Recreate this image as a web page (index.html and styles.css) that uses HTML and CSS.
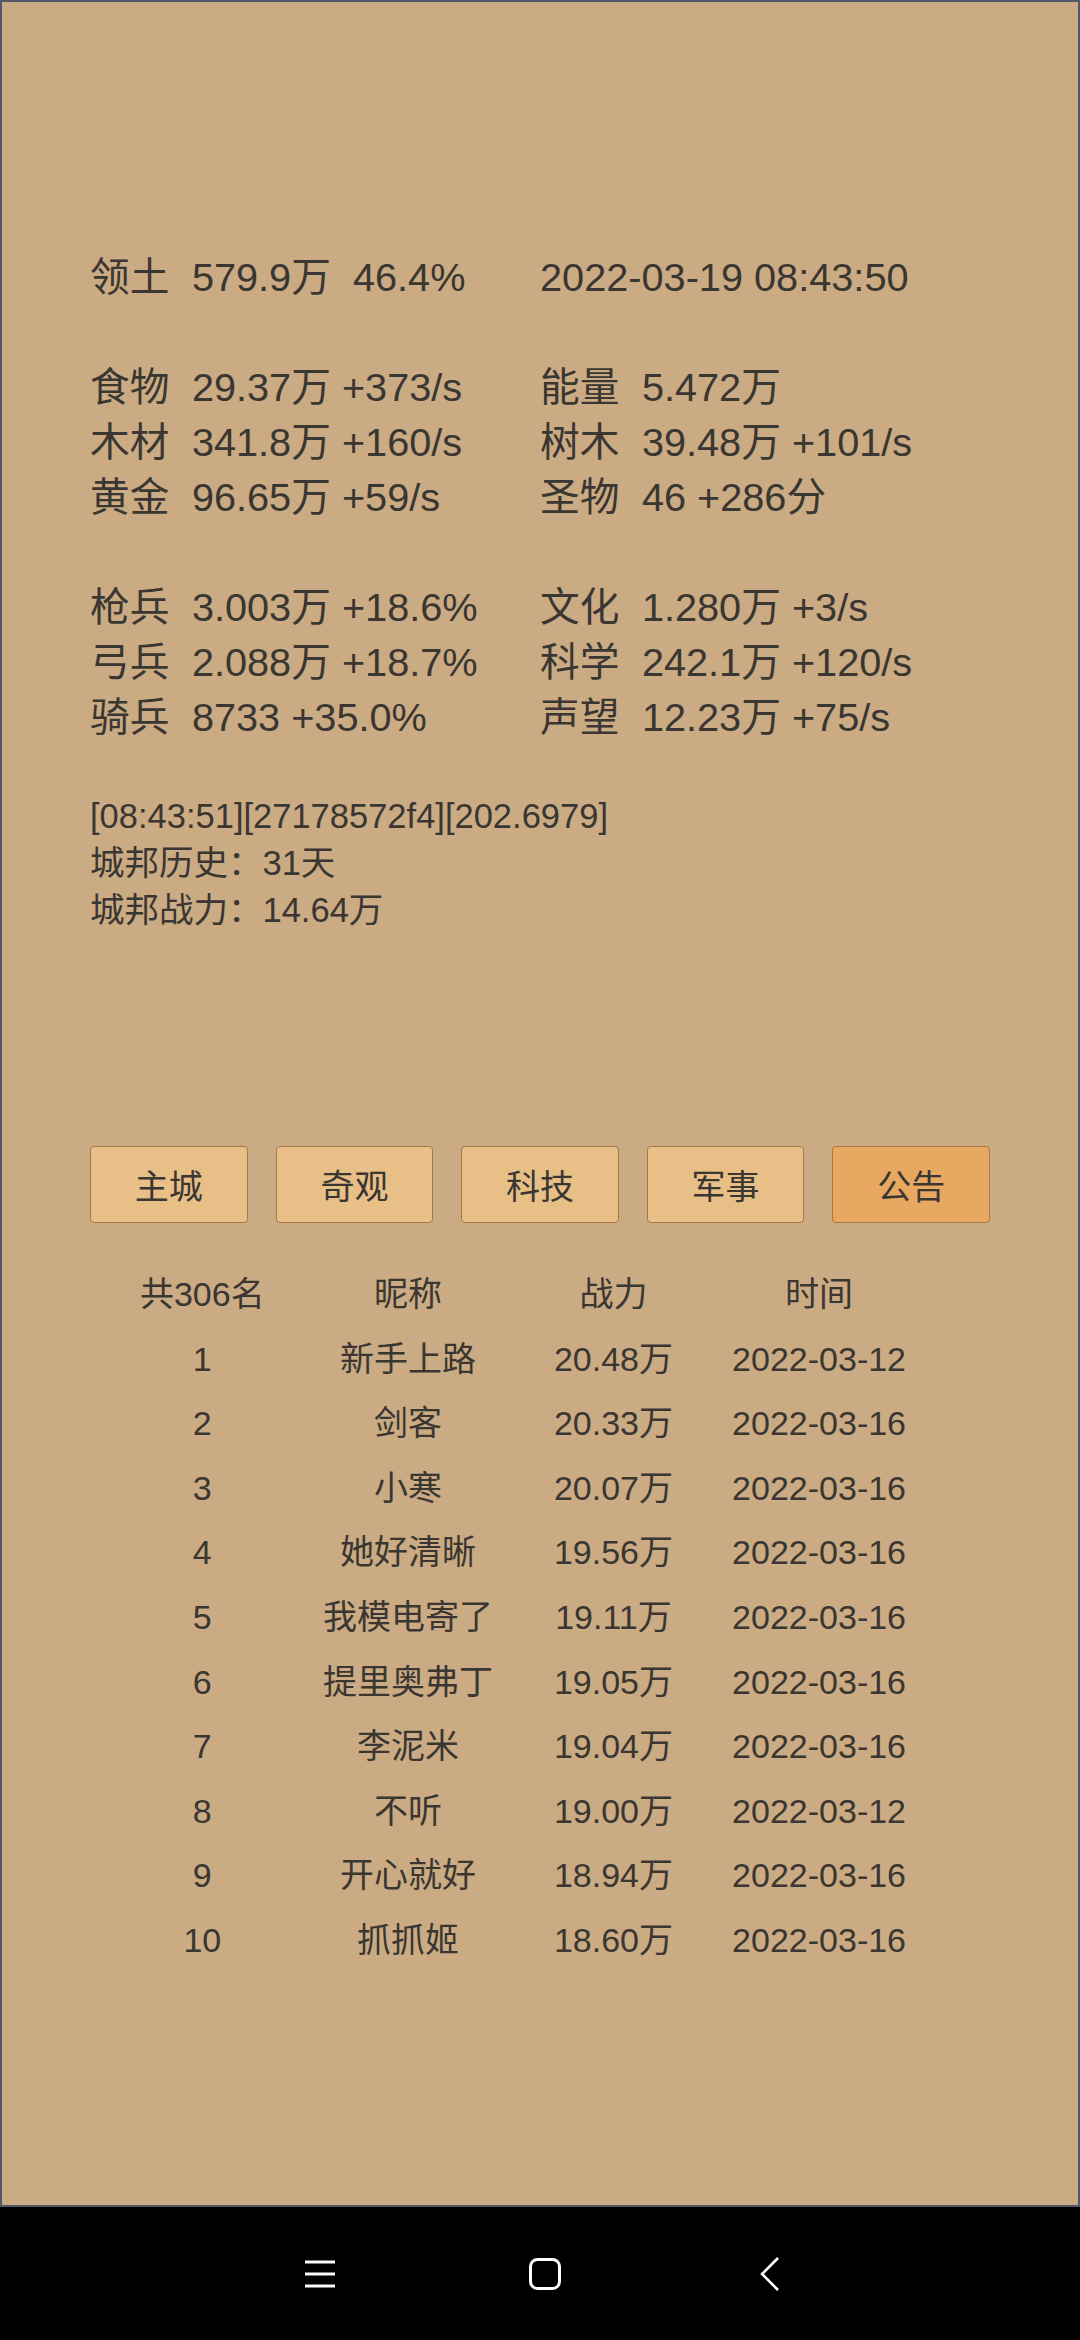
FILE: index.html
```html
<!DOCTYPE html>
<html lang="zh-CN">
<head>
<meta charset="utf-8">
<title>城邦</title>
<link rel="stylesheet" href="styles.css">
</head>
<body>
<div class="phone">
  <main class="screen">
    <section class="stats">
      <div class="group">
        <div class="stat"><span class="lbl">领土</span>579.9万&nbsp; 46.4%</div>
        <div class="stat">2022-03-19 08:43:50</div>
      </div>
      <div class="group">
        <div class="stat"><span class="lbl">食物</span>29.37万 +373/s</div>
        <div class="stat"><span class="lbl">能量</span>5.472万</div>
        <div class="stat"><span class="lbl">木材</span>341.8万 +160/s</div>
        <div class="stat"><span class="lbl">树木</span>39.48万 +101/s</div>
        <div class="stat"><span class="lbl">黄金</span>96.65万 +59/s</div>
        <div class="stat"><span class="lbl">圣物</span>46 +286分</div>
      </div>
      <div class="group">
        <div class="stat"><span class="lbl">枪兵</span>3.003万 +18.6%</div>
        <div class="stat"><span class="lbl">文化</span>1.280万 +3/s</div>
        <div class="stat"><span class="lbl">弓兵</span>2.088万 +18.7%</div>
        <div class="stat"><span class="lbl">科学</span>242.1万 +120/s</div>
        <div class="stat"><span class="lbl">骑兵</span>8733 +35.0%</div>
        <div class="stat"><span class="lbl">声望</span>12.23万 +75/s</div>
      </div>
    </section>

    <section class="info">
      <div>[08:43:51][27178572f4][202.6979]</div>
      <div>城邦历史：31天</div>
      <div>城邦战力：14.64万</div>
    </section>

    <nav class="tabs">
      <button class="tab">主城</button>
      <button class="tab">奇观</button>
      <button class="tab">科技</button>
      <button class="tab">军事</button>
      <button class="tab active">公告</button>
    </nav>

    <section class="rank">
      <div class="row head"><span>共306名</span><span>昵称</span><span>战力</span><span>时间</span></div>
      <div class="row"><span>1</span><span>新手上路</span><span>20.48万</span><span>2022-03-12</span></div>
      <div class="row"><span>2</span><span>剑客</span><span>20.33万</span><span>2022-03-16</span></div>
      <div class="row"><span>3</span><span>小寒</span><span>20.07万</span><span>2022-03-16</span></div>
      <div class="row"><span>4</span><span>她好清晰</span><span>19.56万</span><span>2022-03-16</span></div>
      <div class="row"><span>5</span><span>我模电寄了</span><span>19.11万</span><span>2022-03-16</span></div>
      <div class="row"><span>6</span><span>提里奥弗丁</span><span>19.05万</span><span>2022-03-16</span></div>
      <div class="row"><span>7</span><span>李泥米</span><span>19.04万</span><span>2022-03-16</span></div>
      <div class="row"><span>8</span><span>不听</span><span>19.00万</span><span>2022-03-12</span></div>
      <div class="row"><span>9</span><span>开心就好</span><span>18.94万</span><span>2022-03-16</span></div>
      <div class="row"><span>10</span><span>抓抓姬</span><span>18.60万</span><span>2022-03-16</span></div>
    </section>
  </main>

  <div class="navbar">
    <span class="navbtn">
      <svg width="30" height="28" viewBox="0 0 30 28"><g stroke="#fff" stroke-width="3"><line x1="0" y1="2" x2="30" y2="2"/><line x1="0" y1="14" x2="30" y2="14"/><line x1="0" y1="26" x2="30" y2="26"/></g></svg>
    </span>
    <span class="navbtn">
      <svg width="34" height="34" viewBox="0 0 34 34"><rect x="2.5" y="2.5" width="29" height="29" rx="7" fill="none" stroke="#fff" stroke-width="3"/></svg>
    </span>
    <span class="navbtn">
      <svg width="20" height="34" viewBox="0 0 20 34"><polyline points="18,1 2,17 18,33" fill="none" stroke="#fff" stroke-width="2.6" stroke-linejoin="miter"/></svg>
    </span>
  </div>
</div>
</body>
</html>
```

FILE: styles.css
```css
* {
  box-sizing: border-box;
}

html, body {
  margin: 0;
  padding: 0;
  width: 1080px;
  height: 2340px;
  background: #000;
}

body {
  font-family: "Liberation Sans", "Noto Sans CJK SC", sans-serif;
  color: #3a3631;
}

.phone {
  width: 1080px;
  height: 2340px;
  display: flex;
  flex-direction: column;
}

.screen {
  height: 2207px;
  background: #caab83;
  border: 2px solid #525769;
  padding: 248px 88px 0 88px;
}

.stats {
  font-size: 39.7px;
  line-height: 55px;
}

.group {
  display: grid;
  grid-template-columns: 450px 450px;
  margin-bottom: 55px;
}

.group:last-child {
  margin-bottom: 0;
}

.stat {
  white-space: nowrap;
}

.lbl {
  display: inline-block;
  margin-right: 22.5px;
}

.info {
  margin-top: 48px;
  font-size: 34.5px;
  line-height: 47px;
}

.tabs {
  margin-top: 212px;
  display: flex;
  gap: 28px;
}

.tab {
  flex: 1;
  height: 77px;
  padding: 0;
  background: #e8bf87;
  border: 1.5px solid #a67845;
  border-radius: 4px;
  font-family: "Liberation Sans", "Noto Sans CJK SC", sans-serif;
  font-size: 34px;
  color: #3a3631;
}

.tab.active {
  background: #e9a862;
}

.rank {
  margin-top: 39px;
  padding-left: 9.5px;
  font-size: 34px;
  line-height: 64.6px;
}

.row {
  display: grid;
  grid-template-columns: repeat(4, 205.6px);
  text-align: center;
  white-space: nowrap;
}

.navbar {
  flex: 1;
  background: #000;
  display: flex;
  justify-content: center;
  align-items: center;
  gap: 185px;
  padding-left: 10px;
}

.navbtn {
  width: 40px;
  height: 40px;
  display: flex;
  align-items: center;
  justify-content: center;
}

.navbtn svg {
  display: block;
}
```
